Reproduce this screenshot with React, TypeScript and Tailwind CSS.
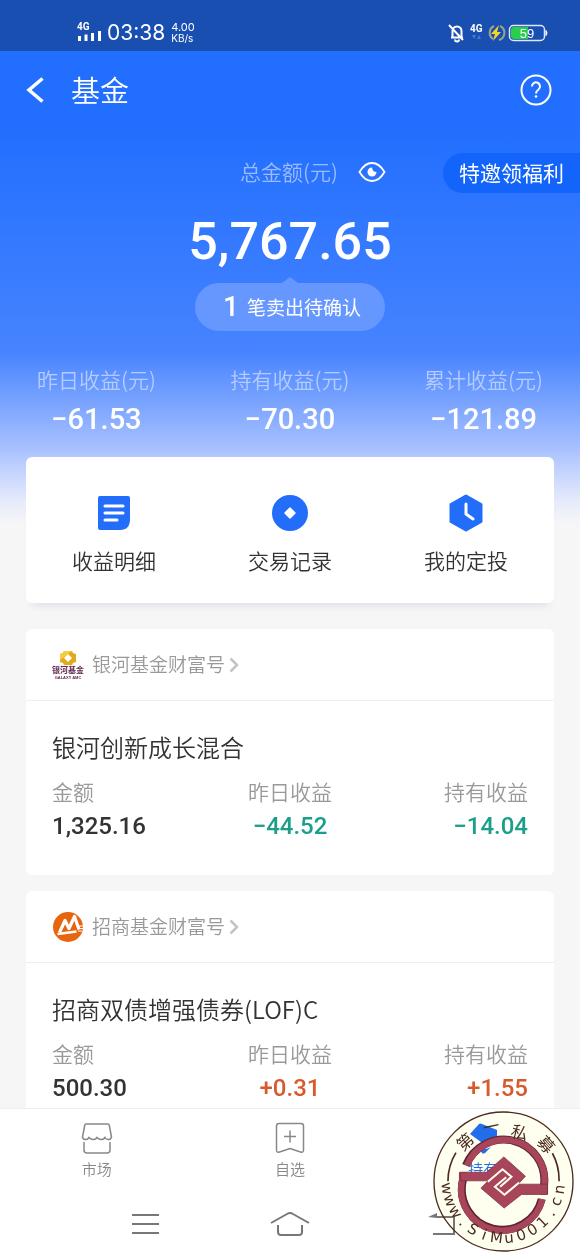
import { clsx } from "clsx";

const sans = "font-['Noto_Sans_CJK_SC',sans-serif]";
const digits = "font-['Roboto',sans-serif]";

const summary = [
  { label: "昨日收益(元)", value: "−61.53" },
  { label: "持有收益(元)", value: "−70.30" },
  { label: "累计收益(元)", value: "−121.89" },
];

const funds = [
  {
    house: "银河基金财富号",
    logo: <GalaxyLogo />,
    name: "银河创新成长混合",
    amount: "1,325.16",
    day: "−44.52",
    total: "−14.04",
    up: false,
  },
  {
    house: "招商基金财富号",
    logo: <MerchantsLogo />,
    name: "招商双债增强债券(LOF)C",
    amount: "500.30",
    day: "+0.31",
    total: "+1.55",
    up: true,
  },
];

function GalaxyLogo() {
  return (
    <svg viewBox="0 0 32 32" className="size-8">
      <path d="M12 2h8l1 2 3 1v8l-3 1-1 2h-8l-1-2-3-1V5l3-1z" fill="#e3a81c" />
      <path d="M12 2h8l-4 3-5 4-3 2V5l3-1z" fill="#f5cc3d" />
      <path d="M16 5l4 4-4 4-4-4z" fill="#fff" />
      <text x="16" y="24" textAnchor="middle" fontSize="8" fontWeight="700" fill="#5e2750" fontFamily="Noto Sans CJK SC, sans-serif">
        银河基金
      </text>
      <text x="16" y="30" textAnchor="middle" fontSize="4" fontWeight="700" fill="#5e2750" fontFamily="Liberation Sans, sans-serif">
        GALAXY AMC
      </text>
    </svg>
  );
}

function MerchantsLogo() {
  return (
    <svg viewBox="0 0 32 32" className="size-8">
      <circle cx="16" cy="16" r="15" fill="#e8650f" />
      <path d="M7.500 21.500L13 9.500l4 8 5.500-12 4.500 13" fill="none" stroke="#fff" strokeWidth="3.200" strokeLinejoin="round" />
      <path d="M5.500 23l19-2.500" stroke="#fff" strokeWidth="2.500" />
      <path d="M25 15h6M26 17.500h5M26 20h4" stroke="#fff" strokeWidth="1" />
    </svg>
  );
}

function StatusBar() {
  return (
    <div className="flex h-[51px] items-center justify-between bg-[#194fb0] pl-[77px] pr-8 pt-[14px] text-white">
      <div className="flex items-center gap-1 font-['Inter',sans-serif]">
        <svg viewBox="0 0 26 22" className="h-[22px] w-[26px]">
          <text x="0" y="8" fontSize="10" fontWeight="700" fill="#fff" fontFamily="Roboto, sans-serif">
            4G
          </text>
          <path d="M2.500 14v5M9 12.500v6.500M15.500 11v8M22.500 9v10" stroke="#fff" strokeWidth="3" />
        </svg>
        <span className="text-[21px] leading-6">03:38</span>
        <span className="flex flex-col pl-0.5 text-[11px] leading-[11px]">
          <span>4.00</span>
          <span className="text-[10px]">KB/s</span>
        </span>
      </div>
      <svg viewBox="0 0 100 20" className="h-5 w-[100px]">
        <g fill="none" stroke="#fff" strokeWidth="2">
          <path d="M3 14.500h12M4.500 14V8a4.500 4.500 0 0 1 9 0v6M1 2l14 15" />
          <path d="M7 16.500a2 2 0 0 0 4 0" />
        </g>
        <text x="22" y="9" fontSize="10" fontWeight="700" fill="#fff" fontFamily="Roboto, sans-serif">
          4G
        </text>
        <path d="M24 12h4l-2 4zM29 16h4l-2-4z" fill="#4c78c8" />
        <path d="M46 3a7.500 7.500 0 0 0-1 13M52 3a7.500 7.500 0 0 1-1 14" fill="none" stroke="#9aa58a" strokeWidth="2" />
        <path d="M51 2l-8 9h4l-2 7 8-9h-4z" fill="#f5d327" />
        <rect x="61.500" y="2.500" width="35" height="15" rx="4" fill="none" stroke="#dfe8fa" strokeWidth="1.500" />
        <path d="M66 4h14v12H66a3 3 0 0 1-3-3V7a3 3 0 0 1 3-3z" fill="#27cf4a" />
        <path d="M98 7.500q2 2.500 0 5z" fill="#fff" stroke="#fff" />
        <text x="79" y="14.500" textAnchor="middle" fontSize="13" fill="#fff" fontFamily="Liberation Sans, sans-serif">
          59
        </text>
      </svg>
    </div>
  );
}

function Stat({ label, value, tone, align }: { label: string; value: string; tone: string; align: string }) {
  return (
    <div className={clsx("flex flex-col", align)}>
      <dt className="text-[21px] font-[350] leading-8 text-[#999]">{label}</dt>
      <dd className={clsx("text-2xl font-medium leading-[38px]", digits, tone)}>{value}</dd>
    </div>
  );
}

function FundCard({ fund }: { fund: (typeof funds)[number] }) {
  const tone = fund.up ? "text-[#d9592b]" : "text-[#1b9e8a]";
  return (
    <article className="rounded-md bg-white pb-[30px] last:rounded-b-none last:pb-px">
      <a href="#house" className="flex h-[72px] items-center gap-2 border-b border-[#eee] px-[26px] text-[19px] font-[350] text-[#999]">
        {fund.logo}
        <span className="flex items-center gap-1">
          {fund.house}
          <svg viewBox="0 0 10 16" className="h-4 w-[10px]">
            <path d="M1.500 1.500l6.500 6.500-6.500 6.500" fill="none" stroke="#c4c4c4" strokeWidth="2.500" />
          </svg>
        </span>
      </a>
      <div className="px-[26px] pt-[26px]">
        <h2 className="text-2xl font-[350] leading-10 text-[#333]">{fund.name}</h2>
        <dl className="mt-2 grid grid-cols-3">
          <Stat label="金额" value={fund.amount} tone="text-[#333]" align="items-start" />
          <Stat label="昨日收益" value={fund.day} tone={tone} align="items-center" />
          <Stat label="持有收益" value={fund.total} tone={tone} align="items-end" />
        </dl>
      </div>
    </article>
  );
}

const site = "www.SiMu001.cn".split("");

function Seal() {
  return (
    <>
      <div className="pointer-events-none absolute right-[6px] top-[2px] size-[141px] rounded-full bg-[#fffff0] mix-blend-multiply" />
      <svg viewBox="39 33 424 424" className="pointer-events-none absolute right-[6px] top-[2px] size-[141px]">
        <circle cx="251" cy="245" r="209" fill="none" stroke="#4c2c20" strokeWidth="4" />
        <path d="M84 244a166 166 0 0 1 24-86M418 244a166 166 0 0 0-20-84" fill="none" stroke="#4c2c20" strokeWidth="5" />
        <g fill="none" stroke="#5e2632" strokeWidth="24">
          <path d="M138 197A122 122 0 0 1 373 255V283" />
          <path d="M129 218V240A122 122 0 0 0 366 298" />
        </g>
        <g fill="none" stroke="#a8455a" strokeWidth="19">
          <path d="M141 197A121 121 0 0 1 374 255V283" />
          <path d="M127 218V240A123 123 0 0 0 368 298" />
        </g>
        <path d="M120 217h80l52-46 65 58-22 24h88v31h-78l-52 41-70-60 22-22h-82z" fill="#a8455a" stroke="#6d2c3a" strokeWidth="2" />
        <path d="M204 246l44-38 27 23-34 30M298 248l-44 37-29-24 34-29" fill="none" stroke="#fffff0" strokeWidth="6" />
        <g fill="#4c2c20" fontFamily="Noto Sans CJK SC, sans-serif" fontSize="50" textAnchor="middle">
          <text transform="translate(136 126) rotate(-42)" y="18">第</text>
          <text transform="translate(214 80) rotate(-12)" y="18">一</text>
          <text transform="translate(299 98) rotate(14)" y="18">私</text>
          <text transform="translate(379 134) rotate(48)" y="18">募</text>
        </g>
        <g fill="#4c2c20" fontFamily="DejaVu Sans, sans-serif" fontSize="45" textAnchor="middle">
          {site.map((c, i) => (
            <text key={i} transform={`rotate(${83 - i * 12.7} 250 245)`} x="250" y="430">
              {c}
            </text>
          ))}
        </g>
      </svg>
    </>
  );
}

export default function App() {
  return (
    <div className={clsx("flex min-h-screen flex-col bg-[#f6f6f7]", sans)}>
      <StatusBar />
      <main className="flex-1 bg-[linear-gradient(#216eff_0,#226fff_80px,#4683ff_300px,#a5bfff_395px,#e6ebfb_450px,#f6f6f7_472px)]">
        <header className="flex h-[78px] items-center px-6 text-white">
          <button type="button" aria-label="返回" className="w-[47px]">
            <svg viewBox="0 0 24 28" className="h-7 w-6">
              <path d="M18.500 2.500L5 14l13.500 11.500" fill="none" stroke="#fff" strokeWidth="3.500" />
            </svg>
          </button>
          <h1 className="flex-1 text-[29px] font-[350]">基金</h1>
          <button type="button" aria-label="帮助" className="mr-1">
            <svg viewBox="0 0 32 32" className="size-8">
              <circle cx="16" cy="16" r="14.500" fill="none" stroke="#fff" strokeWidth="2" />
              <path d="M12 12.500a4 4 0 1 1 6.500 3c-1.800 1.300-2.500 2-2.500 4" fill="none" stroke="#fff" strokeWidth="2" />
              <circle cx="16" cy="22.500" r="1.300" fill="#fff" />
            </svg>
          </button>
        </header>

        <section className="relative flex flex-col items-center pt-[23px] text-white">
          <a href="#welfare" className="absolute right-0 top-6 flex h-10 items-center rounded-l-full bg-[#1364fb] px-4 text-[21px]">
            特邀领福利
          </a>
          <div className="ml-[46px] flex h-10 items-center gap-5">
            <span className="text-[21px] font-[350] text-[#9dbbff]">总金额(元)</span>
            <button type="button" aria-label="隐藏金额">
              <svg viewBox="0 0 28 22" className="h-[22px] w-7">
                <path d="M1.500 11C5 5 9 2 14 2s9 3 12.500 9C23 17 19 20 14 20S5 17 1.500 11z" fill="none" stroke="#fff" strokeWidth="1.800" />
                <path d="M14 6.500A4.500 4.500 0 1 0 18.500 11q-4 0-4.500-4.500z" fill="#fff" />
              </svg>
            </button>
          </div>
          <p className={clsx("mt-[18px] text-[52px] font-medium leading-[64px]", digits)}>5,767.65</p>
          <div className="mt-[3px] flex flex-col items-center">
            <svg viewBox="0 0 16 6" className="h-[6px] w-4">
              <path d="M0 6l8-6 8 6z" fill="#6697ff" />
            </svg>
            <a href="#pending" className="flex h-12 items-center gap-2 rounded-full bg-[#6697ff] pl-7 pr-6 text-[19px]">
              <span className={clsx("text-[28px] font-medium", digits)}>1</span>
              笔卖出待确认
            </a>
          </div>
        </section>

        <dl className="mt-[30px] flex justify-between px-[37px] text-white">
          {summary.map((s) => (
            <div key={s.label} className="flex flex-col items-center">
              <dt className="text-[21px] font-[350] leading-9 text-[#b5ccff]">{s.label}</dt>
              <dd className={clsx("text-[29px] font-medium leading-[44px]", digits)}>{s.value}</dd>
            </div>
          ))}
        </dl>

        <div className="mt-4 flex flex-col px-[26px]">
          <nav className="grid h-[146px] grid-cols-3 rounded-md bg-white pt-[10px] text-[21px] font-[350] text-[#333] shadow-[0_8px_8px_-6px_#dedbe3]">
            <a href="#detail" className="flex flex-col items-center justify-center gap-3">
              <svg viewBox="0 0 40 40" className="size-10">
                <path d="M6 3h28a2 2 0 0 1 2 2v21q0 11-10 11H6a2 2 0 0 1-2-2V5a2 2 0 0 1 2-2z" fill="#226dfa" />
                <path d="M11 13h18M11 20h18M11 27h12" stroke="#fff" strokeWidth="3" strokeLinecap="round" />
              </svg>
              收益明细
            </a>
            <a href="#records" className="flex flex-col items-center justify-center gap-3">
              <svg viewBox="0 0 40 40" className="size-10">
                <circle cx="20" cy="20" r="18" fill="#226dfa" />
                <path d="M20 15l5 5-5 5-5-5z" fill="#fff" stroke="#fff" strokeWidth="1.500" strokeLinejoin="round" />
              </svg>
              交易记录
            </a>
            <a href="#plan" className="flex flex-col items-center justify-center gap-3">
              <svg viewBox="0 0 40 40" className="size-10">
                <path d="M20 3l15 8.500v17L20 37 5 28.500v-17z" fill="#226dfa" stroke="#226dfa" strokeWidth="3" strokeLinejoin="round" />
                <path d="M20 11v10l7 5" fill="none" stroke="#fff" strokeWidth="3" strokeLinecap="round" strokeLinejoin="round" />
              </svg>
              我的定投
            </a>
          </nav>
          <div className="mt-[26px] flex flex-col gap-4">
            {funds.map((f) => (
              <FundCard key={f.name} fund={f} />
            ))}
          </div>
        </div>
      </main>

      <footer className="relative border-t border-[#eee] bg-white">
        <nav className="grid grid-cols-3 pt-[13px] text-[15px] font-[350] text-[#888]">
          <a href="#market" className="flex flex-col items-center gap-0.5">
            <svg viewBox="0 0 34 34" className="size-[34px]" fill="none" stroke="#888" strokeWidth="1.500">
              <path d="M6 2h22q1 0 1.300 1.500L31.500 15q-1 3-3.500 2.500-2 0-3-2-1.500 2.500-4 2-2 0-4-2-1.500 2.500-4 2-2 0-4-2-1.500 2.500-3.500 2-2.500 0-3-2.500L4.700 3.500Q5 2 6 2zM4 20v8q0 3 3 3h20q3 0 3-3v-8" />
            </svg>
            市场
          </a>
          <a href="#watch" className="flex flex-col items-center gap-0.5">
            <svg viewBox="0 0 34 34" className="size-[34px]" fill="none" stroke="#888" strokeWidth="1.500" strokeLinejoin="round">
              <path d="M6 1.500h22q2.500 0 2.500 2.500v24q0 3-3 2L17 26.500 6.500 30q-3 1-3-2V4q0-2.500 2.500-2.500zM17 8.500v12M11 14.500h12" />
            </svg>
            自选
          </a>
          <a href="#hold" className="flex flex-col items-center gap-0.5 text-[#226dfa]">
            <svg viewBox="0 0 34 34" className="size-[34px]">
              <path d="M4 12l9-10q1-1 3 0l15 6v8l-12 5q-2 1-4-1zM13 26q5 3 12-1l-6 6q-2 1-3 0z" fill="#226dfa" />
            </svg>
            持有
          </a>
        </nav>
        <div className="flex items-center justify-between pb-5 pl-[130px] pr-[122px] pt-[29px]">
          <button type="button" aria-label="菜单">
            <svg viewBox="0 0 30 28" className="h-7 w-[30px]">
              <path d="M2 5h27M2 14h27M2 23h27" stroke="#777" strokeWidth="2" />
            </svg>
          </button>
          <button type="button" aria-label="主页">
            <svg viewBox="0 0 40 28" className="h-7 w-10">
              <path d="M1 13L17 4q3-2 6 0l16 9M8 15v7q0 3 3 3h18q3 0 3-3v-7" fill="none" stroke="#777" strokeWidth="2" />
            </svg>
          </button>
          <button type="button" aria-label="后退">
            <svg viewBox="0 0 38 28" className="h-7 w-[38px]">
              <path d="M16 7h18v17H13" fill="none" stroke="#777" strokeWidth="2" />
              <path d="M8 7l9-4v5z" fill="#777" />
            </svg>
          </button>
        </div>
        <Seal />
      </footer>
    </div>
  );
}
